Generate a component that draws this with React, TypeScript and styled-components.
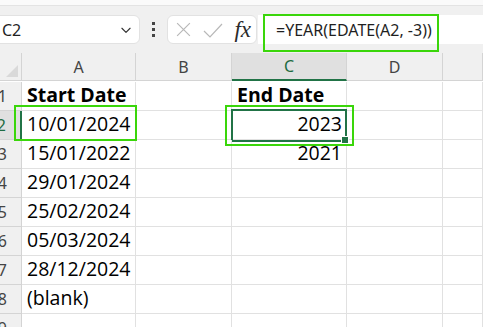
import styled, { createGlobalStyle } from 'styled-components';

const GlobalStyle = createGlobalStyle`
  html, body {
    margin: 0;
    padding: 0;
    background: #ffffff;
  }
  body {
    font-family: "Open Sans", "Liberation Sans", sans-serif;
  }
`;

const Page = styled.div`
  position: relative;
  width: 483px;
  height: 327px;
  overflow: hidden;
  background: #ffffff;
`;

const TopStrip = styled.div`
  height: 5px;
  background: #fafafa;
  border-bottom: 1px solid #e3e3e3;
`;

const FormulaBar = styled.div`
  display: flex;
  align-items: center;
  height: 47px;
  background: #f0f0f0;
  box-sizing: border-box;
`;

const NameBox = styled.div`
  display: flex;
  align-items: center;
  justify-content: space-between;
  margin-left: -10px;
  width: 150px;
  height: 29px;
  box-sizing: border-box;
  padding: 0 6px 0 11px;
  background: #ffffff;
  border: 1px solid #e2e2e2;
  border-radius: 6px;
  font-family: "Noto Sans", "Open Sans", sans-serif;
  font-size: 16px;
  color: #1f1f1f;
`;

const Dots = styled.div`
  display: flex;
  flex-direction: column;
  gap: 3px;
  width: 27px;
  align-items: center;

  span {
    width: 3px;
    height: 3px;
    background: #444;
  }
`;

const FxBox = styled.div`
  display: flex;
  align-items: center;
  gap: 11px;
  width: 90px;
  height: 29px;
  box-sizing: border-box;
  padding: 0 5px 0 7px;
  background: #ffffff;
  border: 1px solid #e2e2e2;
  border-radius: 6px;
`;

const FxLabel = styled.span`
  margin-left: auto;
  font-family: "Liberation Serif", "DejaVu Serif", serif;
  font-style: italic;
  font-size: 23px;
  color: #2b2b2b;
  line-height: 1;
`;

const FormulaInput = styled.div`
  flex: 1;
  height: 29px;
  margin-left: 1px;
  display: flex;
  align-items: center;
  padding-left: 18px;
  background: #ffffff;
  font-family: "Noto Sans", "Open Sans", sans-serif;
  font-size: 16px;
  color: #1f1f1f;
`;

const Sheet = styled.div`
  display: grid;
  grid-template-columns: 22px 114px 96px 115px 96px 1fr;
  grid-auto-rows: 29px;
`;

const HeadCell = styled.div<{ $active?: boolean; $corner?: boolean }>`
  position: relative;
  height: 28px;
  display: flex;
  align-items: center;
  justify-content: center;
  box-sizing: border-box;
  background: ${(p) => (p.$active ? '#e0e0e0' : '#f0f0f0')};
  border-right: 1px solid #d4d4d4;
  border-bottom: ${(p) => (p.$active ? '2px solid #217346' : '1px solid #d4d4d4')};
  font-family: "Noto Sans", "Open Sans", sans-serif;
  font-size: 16px;
  color: ${(p) => (p.$active ? '#1e6b41' : '#444444')};

  ${(p) =>
    p.$corner &&
    `
    &::after {
      content: '';
      position: absolute;
      right: 3px;
      bottom: 3px;
      width: 0;
      height: 0;
      border-left: 12px solid transparent;
      border-bottom: 12px solid #d9d9d9;
    }
  `}
`;

const RowHead = styled.div<{ $active?: boolean }>`
  display: flex;
  align-items: center;
  justify-content: flex-end;
  padding-right: 14px;
  overflow: hidden;
  box-sizing: border-box;
  background: ${(p) => (p.$active ? '#e0e0e0' : '#f0f0f0')};
  border-bottom: 1px solid #d4d4d4;
  border-right: ${(p) => (p.$active ? '2px solid #217346' : '1px solid #d4d4d4')};
  font-family: "Noto Sans", "Open Sans", sans-serif;
  font-size: 16px;
  color: ${(p) => (p.$active ? '#1e6b41' : '#444444')};
  white-space: nowrap;
`;

const Cell = styled.div<{ $bold?: boolean; $right?: boolean; $selected?: boolean }>`
  position: relative;
  display: flex;
  align-items: flex-end;
  justify-content: ${(p) => (p.$right ? 'flex-end' : 'flex-start')};
  padding: 0 4px 2px 5px;
  box-sizing: border-box;
  border-right: 1px solid #e1e1e1;
  border-bottom: 1px solid #e1e1e1;
  font-family: "Open Sans", "Liberation Sans", sans-serif;
  font-size: 19.5px;
  font-weight: ${(p) => (p.$bold ? 700 : 400)};
  color: #000000;
  white-space: nowrap;

  ${(p) =>
    p.$selected &&
    `
    &::after {
      content: '';
      position: absolute;
      left: -1px;
      top: -2px;
      right: -1px;
      bottom: -3px;
      border: 2px solid #217346;
    }
    &::before {
      content: '';
      position: absolute;
      right: -3px;
      bottom: -5px;
      width: 6px;
      height: 6px;
      background: #217346;
      border: 1px solid #ffffff;
      z-index: 1;
    }
  `}
`;

const Highlight = styled.div<{ $x: number; $y: number; $w: number; $h: number }>`
  position: absolute;
  left: ${(p) => p.$x}px;
  top: ${(p) => p.$y}px;
  width: ${(p) => p.$w}px;
  height: ${(p) => p.$h}px;
  box-sizing: border-box;
  border: 2px solid #3ad60a;
  pointer-events: none;
`;

const columns = ['A', 'B', 'C', 'D', ''];

const rows: { a: string; c: string; bold?: boolean }[] = [
  { a: 'Start Date', c: 'End Date', bold: true },
  { a: '10/01/2024', c: '2023' },
  { a: '15/01/2022', c: '2021' },
  { a: '29/01/2024', c: '' },
  { a: '25/02/2024', c: '' },
  { a: '05/03/2024', c: '' },
  { a: '28/12/2024', c: '' },
  { a: '(blank)', c: '' },
  { a: '', c: '' },
];

const App = () => {
  return (
    <Page>
      <GlobalStyle />
      <TopStrip />
      <FormulaBar>
        <NameBox>
          <span>C2</span>
          <svg width="14" height="14" viewBox="0 0 24 24" fill="none" stroke="#333" strokeWidth="2" strokeLinecap="round" strokeLinejoin="round">
            <path d="M5 9l7 7 7-7" />
          </svg>
        </NameBox>
        <Dots>
          <span />
          <span />
          <span />
        </Dots>
        <FxBox>
          <svg width="17" height="17" viewBox="0 0 16 16" stroke="#b8b8b8" strokeWidth="1.1" fill="none">
            <path d="M2 2l12 12M14 2L2 14" />
          </svg>
          <svg width="20" height="16" viewBox="0 0 20 16" stroke="#b8b8b8" strokeWidth="1.2" fill="none">
            <path d="M1 9l6 6L19 2" />
          </svg>
          <FxLabel>fx</FxLabel>
        </FxBox>
        <FormulaInput>=YEAR(EDATE(A2, -3))</FormulaInput>
      </FormulaBar>
      <Sheet>
        <HeadCell $corner />
        {columns.map((c, i) => (
          <HeadCell key={i} $active={c === 'C'}>
            {c}
          </HeadCell>
        ))}
        {rows.map((r, i) => (
          <>
            <RowHead key={`h${i}`} $active={i === 1}>
              {i + 1}
            </RowHead>
            <Cell key={`a${i}`} $bold={r.bold}>
              {r.a}
            </Cell>
            <Cell key={`b${i}`} />
            <Cell key={`c${i}`} $bold={r.bold} $right={!r.bold} $selected={i === 1}>
              {r.c}
            </Cell>
            <Cell key={`d${i}`} />
            <Cell key={`e${i}`} />
          </>
        ))}
      </Sheet>
      <Highlight $x={263} $y={14} $w={176} $h={38} />
      <Highlight $x={14} $y={105} $w={123} $h={36} />
      <Highlight $x={225} $y={105} $w={129} $h={41} />
    </Page>
  );
};

export default App;
